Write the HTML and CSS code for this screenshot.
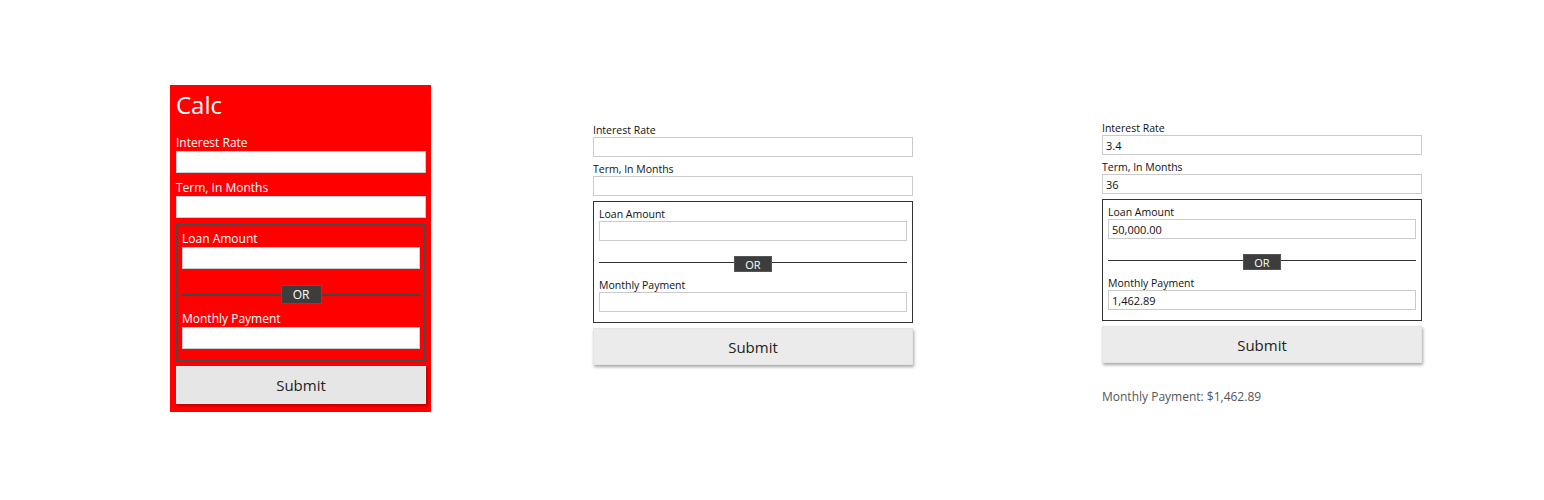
FILE: index.html
```html
<!DOCTYPE html>
<html>
<head>
<meta charset="utf-8">
<link rel="stylesheet" href="styles.css">
</head>
<body>
<div class="page">
  <form class="calc calc--red">
    <h1 class="calc-title">Calc</h1>
    <label class="field-label field-label--first">Interest Rate</label>
    <input class="field-input" type="text">
    <label class="field-label">Term, In Months</label>
    <input class="field-input" type="text">
    <div class="group">
      <label class="field-label field-label--first">Loan Amount</label>
      <input class="field-input" type="text">
      <div class="or-row"><span class="or-line"></span><span class="or-badge">OR</span><span class="or-line"></span></div>
      <label class="field-label field-label--first">Monthly Payment</label>
      <input class="field-input" type="text">
    </div>
    <button class="submit" type="button">Submit</button>
  </form>

  <form class="calc calc--plain calc--mid">
    <label class="field-label field-label--first">Interest Rate</label>
    <input class="field-input" type="text">
    <label class="field-label">Term, In Months</label>
    <input class="field-input" type="text">
    <div class="group">
      <label class="field-label field-label--first">Loan Amount</label>
      <input class="field-input" type="text">
      <div class="or-row"><span class="or-line"></span><span class="or-badge">OR</span><span class="or-line"></span></div>
      <label class="field-label field-label--first">Monthly Payment</label>
      <input class="field-input" type="text">
    </div>
    <button class="submit" type="button">Submit</button>
  </form>

  <form class="calc calc--plain calc--right">
    <label class="field-label field-label--first">Interest Rate</label>
    <input class="field-input" type="text" value="3.4">
    <label class="field-label">Term, In Months</label>
    <input class="field-input" type="text" value="36">
    <div class="group">
      <label class="field-label field-label--first">Loan Amount</label>
      <input class="field-input" type="text" value="50,000.00">
      <div class="or-row"><span class="or-line"></span><span class="or-badge">OR</span><span class="or-line"></span></div>
      <label class="field-label field-label--first">Monthly Payment</label>
      <input class="field-input" type="text" value="1,462.89">
    </div>
    <button class="submit" type="button">Submit</button>
    <p class="result">Monthly Payment: $1,462.89</p>
  </form>
</div>
</body>
</html>
```
FILE: styles.css
```css
* { box-sizing: border-box; }
html, body { margin: 0; padding: 0; background: #fff; }
body { font-family: "Open Sans", "Liberation Sans", sans-serif; color: #111; }

.page {
  display: flex;
  align-items: flex-start;
  padding-left: 170px;
  height: 500px;
}

.calc { display: flex; flex-direction: column; margin: 0; }

.field-label { display: block; }
.field-input {
  display: block;
  width: 100%;
  margin: 0;
  background: #fff;
  font-family: inherit;
  color: #111;
  outline: none;
}

.group { display: flex; flex-direction: column; }
.or-row { display: flex; align-items: center; }
.or-line { flex: 1; }
.or-badge {
  display: flex;
  align-items: center;
  justify-content: center;
  background: #3d3d3d;
  color: #fff;
  border: 1px solid #555;
}

.submit {
  display: block;
  width: 100%;
  font-family: inherit;
  font-size: 15px;
  color: #222;
  padding: 0;
  cursor: pointer;
}

/* ---------- red panel ---------- */
.calc--red {
  width: 261px;
  margin-top: 85px;
  padding: 4px 5px 8px 6px;
  background: #ff0000;
}
.calc-title {
  margin: 0 0 13px 0;
  font-size: 24px;
  line-height: 32px;
  font-weight: 400;
  color: #fff;
}
.calc--red .field-label {
  font-size: 12px;
  line-height: 17px;
  color: #fff;
  margin-top: 6px;
}
.calc--red .field-label--first { margin-top: 0; }
.calc--red .field-input {
  height: 22px;
  border: 1px solid #c9ccd0;
  font-size: 12px;
  padding: 0 4px;
}
.calc--red .group {
  margin-top: 6px;
  border: 2px solid #4a4a4a;
  padding: 4px 4px 10px 4px;
}
.calc--red .or-row { margin: 16px 0 6px 0; }
.calc--red .or-line { height: 2px; background: #444; }
.calc--red .or-badge {
  width: 41px;
  height: 19px;
  font-size: 12px;
}
.calc--red .submit {
  margin-top: 5px;
  height: 38px;
  background: #e6e6e6;
  border: 1px solid #f0f0f0;
  box-shadow: 2px 2px 2px #c00000;
}

/* ---------- plain panels ---------- */
.calc--plain { width: 320px; }
.calc--mid { margin-left: 162px; margin-top: 123px; }
.calc--right { margin-left: 189px; margin-top: 121px; }

.calc--plain .field-label {
  font-size: 10.5px;
  line-height: 14px;
  color: #111;
  margin-top: 5px;
}
.calc--plain .field-label--first { margin-top: 0; }
.calc--plain .field-input {
  height: 20px;
  border: 1px solid #cbcbcb;
  font-size: 11px;
  padding: 0 3px;
}
.calc--plain .group {
  margin-top: 5px;
  border: 1px solid #333;
  padding: 5px 5px 10px 5px;
}
.calc--plain .or-row { margin: 15px 0 6px 0; }
.calc--plain .or-line { height: 1px; background: #333; margin-bottom: 4px; }
.calc--plain .or-badge {
  width: 38px;
  height: 16px;
  font-size: 11px;
}
.calc--plain .submit {
  margin-top: 5px;
  height: 37px;
  background: #ebebeb;
  border: 1px solid #e4e4e4;
  box-shadow: 1px 2px 3px rgba(0, 0, 0, 0.35);
}

.result {
  margin: 26px 0 0 0;
  font-size: 12px;
  line-height: 16px;
  font-weight: 400;
  color: #555;
}
```
